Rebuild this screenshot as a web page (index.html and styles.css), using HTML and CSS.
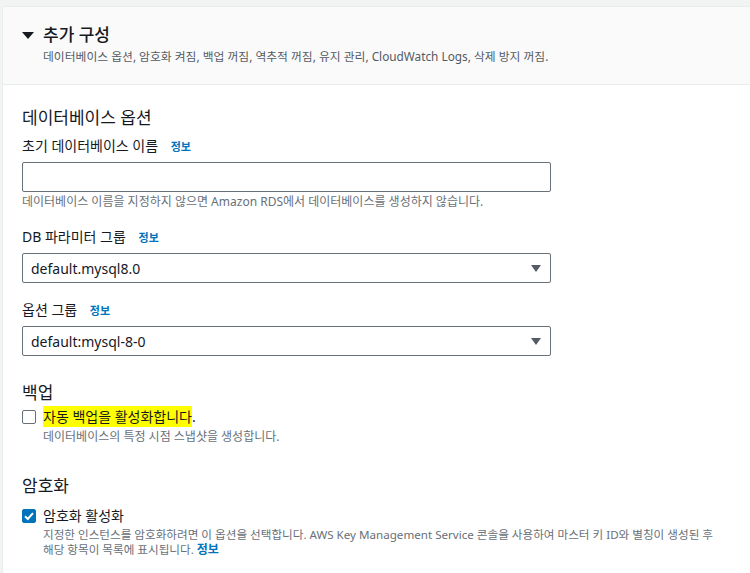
FILE: index.html
```html
<!DOCTYPE html>
<html lang="ko">
<head>
    <meta charset="UTF-8">
    <title>추가 구성</title>
    <link rel="stylesheet" href="styles.css">
</head>
<body>
    <div class="panel">
        <div class="panel-header">
            <div class="header-title">
                <span class="caret"></span>
                <h1>추가 구성</h1>
            </div>
            <div class="header-desc">데이터베이스 옵션, 암호화 켜짐, 백업 꺼짐, 역추적 꺼짐, 유지 관리, CloudWatch Logs, 삭제 방지 꺼짐.</div>
        </div>
        <div class="panel-body">
            <h2>데이터베이스 옵션</h2>
            <div class="field">
                <label class="label">초기 데이터베이스 이름 <a class="info">정보</a></label>
                <input class="text-input" type="text">
                <div class="hint">데이터베이스 이름을 지정하지 않으면 Amazon RDS에서 데이터베이스를 생성하지 않습니다.</div>
            </div>
            <div class="field">
                <label class="label">DB 파라미터 그룹 <a class="info">정보</a></label>
                <div class="select">
                    <span>default.mysql8.0</span>
                    <span class="select-arrow"></span>
                </div>
            </div>
            <div class="field">
                <label class="label">옵션 그룹 <a class="info">정보</a></label>
                <div class="select">
                    <span>default:mysql-8-0</span>
                    <span class="select-arrow"></span>
                </div>
            </div>

            <h2 class="section-backup">백업</h2>
            <div class="check-row">
                <span class="checkbox"></span>
                <div>
                    <div class="check-label"><mark>자동 백업을 활성화합니다</mark>.</div>
                    <div class="hint">데이터베이스의 특정 시점 스냅샷을 생성합니다.</div>
                </div>
            </div>

            <h2 class="section-crypto">암호화</h2>
            <div class="check-row">
                <span class="checkbox checked">
                    <svg viewBox="0 0 14 14" width="14" height="14"><path d="M3 7.2 L5.8 10 L11 4.2" fill="none" stroke="#fff" stroke-width="2"/></svg>
                </span>
                <div>
                    <div class="check-label">암호화 활성화</div>
                    <div class="hint wrap">
                        <div>지정한 인스턴스를 암호화하려면 이 옵션을 선택합니다. AWS Key Management Service 콘솔을 사용하여 마스터 키 ID와 별칭이 생성된 후</div>
                        <div>해당 항목이 목록에 표시됩니다. <a class="info plain">정보</a></div>
                    </div>
                </div>
            </div>
        </div>
    </div>
</body>
</html>
```

FILE: styles.css
```css
* {
    box-sizing: border-box;
    margin: 0;
    padding: 0;
}
body {
    background: #f2f3f3;
    color: #16191f;
    font-family: 'Noto Sans', 'Noto Sans CJK KR', sans-serif;
    overflow: hidden;
}
.panel {
    background: #fff;
    border: 1px solid #eaeded;
    border-right: none;
    margin: 6px 0 0 2px;
    min-height: 600px;
}
.panel-header {
    background: #fafafa;
    border-bottom: 1px solid #eaeded;
    padding: 16px 20px 20px 19px;
}
.header-title {
    align-items: center;
    display: flex;
    gap: 9px;
}
.caret {
    border-left: 6px solid transparent;
    border-right: 6px solid transparent;
    border-top: 7px solid #16191f;
    height: 0;
    width: 0;
}
h1 {
    font-size: 17px;
    font-weight: 500;
    line-height: 24px;
}
.header-desc {
    color: #545b64;
    font-size: 11.8px;
    line-height: 16px;
    margin-top: 1px;
    padding-left: 21px;
}
.panel-body {
    padding: 21px 19px;
}
h2 {
    font-size: 17px;
    font-weight: 400;
    line-height: 24px;
}
.field {
    margin-top: 6px;
}
.field + .field {
    margin-top: 17px;
}
.label {
    display: block;
    font-size: 14px;
    line-height: 20px;
    margin-bottom: 5px;
}
.info {
    color: #0073bb;
    font-size: 11px;
    font-weight: 700;
    margin-left: 9px;
}
.info.plain {
    font-size: 12px;
    margin-left: 0;
}
.text-input {
    border: 1px solid #687078;
    border-radius: 2px;
    display: block;
    height: 30px;
    width: 529px;
}
.select {
    align-items: center;
    border: 1px solid #687078;
    border-radius: 2px;
    display: flex;
    font-size: 14px;
    height: 30px;
    justify-content: space-between;
    padding: 0 9px 0 8px;
    width: 529px;
}
.select-arrow {
    border-left: 5px solid transparent;
    border-right: 5px solid transparent;
    border-top: 7px solid #545b64;
    height: 0;
    width: 0;
}
.hint {
    color: #687078;
    font-size: 12px;
    line-height: 16px;
    margin-top: 2px;
}
.hint.wrap {
    font-size: 11.6px;
    line-height: 15px;
    margin-top: 1px;
    white-space: nowrap;
}
.section-backup {
    margin-top: 25px;
}
.section-crypto {
    margin-top: 29px;
}
.check-row {
    display: flex;
    gap: 7px;
    margin-top: 2px;
}
.section-crypto + .check-row {
    margin-top: 8px;
}
.checkbox {
    border: 1px solid #687078;
    border-radius: 2px;
    flex: none;
    height: 14px;
    margin-top: 3px;
    width: 14px;
}
.checkbox.checked {
    background: #0073bb;
    border-color: #0073bb;
    display: flex;
}
.checkbox.checked svg {
    margin: -1px;
}
.check-label {
    font-size: 14px;
    line-height: 20px;
}
mark {
    background: #ffff00;
    color: #16191f;
    padding: 1px 0;
}
```
